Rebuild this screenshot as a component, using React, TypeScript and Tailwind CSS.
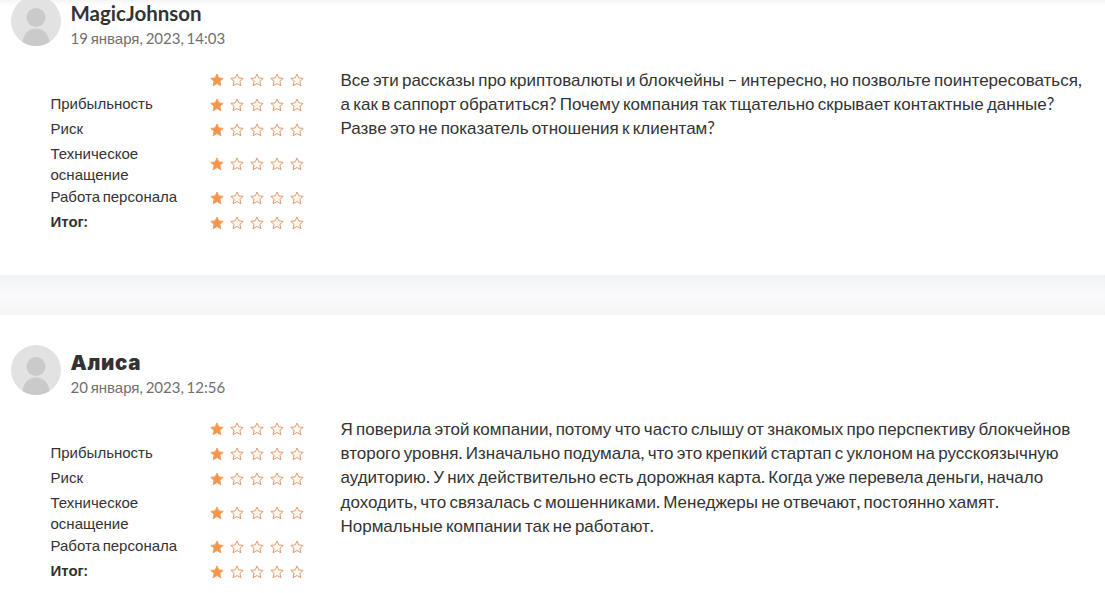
const Star = ({ on }: { on?: boolean }) => (
  <svg className="size-[14px]" viewBox="0 0 14 14" fill={on ? '#f4964a' : '#fffaf0'} stroke={on ? '#f0a060' : '#df9a74'} strokeWidth="1" strokeLinejoin="round">
    <path d="M7 1l1.800 3.900 4.400.5-3.300 2.900 1 4.500L7 10.500l-3.900 2.300 1-4.500L.8 5.400l4.400-.5z" />
  </svg>
);

const Stars = () => (
  <div className="flex gap-[6px]">
    {[0, 1, 2, 3, 4].map((i) => <Star key={i} on={i === 0} />)}
  </div>
);

// Cyrillic letters use the sans fallback; Latin, digits and punctuation stay in Lato.
const Mixed = ({ text }: { text: string }) => (
  <>
    {text.split(/([А-Яа-яЁё]+)/).map((part, i) =>
      i % 2 === 1 ? <span key={i} className="font-['Liberation_Sans',sans-serif] leading-none">{part}</span> : part,
    )}
  </>
);

const rows = [
  { label: [''], h: 'h-[24px]', pad: '' },
  { label: ['Прибыльность'], h: 'h-[25px]', pad: 'pb-[2px]' },
  { label: ['Риск'], h: 'h-[25px]', pad: 'pb-[2px]' },
  { label: ['Техническое', 'оснащение'], h: 'h-[43px]', pad: '' },
  { label: ['Работа персонала'], h: 'h-[25px]', pad: 'pb-[3px]' },
  { label: ['Итог:'], h: 'h-[25px]', pad: 'pb-[3px]', bold: true },
];

type ReviewProps = { name: string; nameClass: string; date: string; lines: string[] };

const Review = ({ name, nameClass, date, lines }: ReviewProps) => (
  <article>
    <header className="flex h-[49px] pl-[11px]">
      <svg className="mt-[-4px] size-[50px] shrink-0" viewBox="0 0 50 50">
        <circle cx="25" cy="25" r="25" fill="#e2e2e2" />
        <circle cx="25" cy="21.5" r="9.5" fill="#cacaca" />
        <path d="M11.500 46c1-8 6-13.500 13.500-13.500s12.500 5.500 13.500 13.500c-8 5.300-19 5.300-27 0z" fill="#cacaca" />
      </svg>
      <div className="pl-[9.5px]">
        <h3 className={nameClass}>{name}</h3>
        <p className="h-[20px] text-[15px] leading-[20px] text-[#707070] [word-spacing:-1.1px]"><Mixed text={date} /></p>
      </div>
    </header>
    <div className="flex pt-[19px] pl-[50.5px]">
      <div className="w-[290px]">
        {rows.map((r, i) => (
          <div key={i} className={`flex items-center ${r.h}`}>
            <div className={`w-[159.5px] text-[15px] leading-[21px] [word-spacing:-1.2px] ${r.pad} ${r.bold ? 'font-bold' : ''}`}>
              {r.label.map((l) => <div key={l}><Mixed text={l} /></div>)}
            </div>
            <Stars />
          </div>
        ))}
      </div>
      <div className="whitespace-nowrap text-[17px] leading-[24.2px] [word-spacing:-1.1px]">
        {lines.map((l) => <p key={l} className="h-[24.2px]"><Mixed text={l} /></p>)}
      </div>
    </div>
  </article>
);

export default function App() {
  return (
    <main className="h-[593px] w-full overflow-hidden bg-white font-[Lato,sans-serif] text-[#333]">
      <section className="h-[275px] bg-linear-to-b from-[#f5f5f5] to-white to-[6px]">
        <Review
          name="MagicJohnson"
          nameClass="h-[28px] text-[20.5px] leading-[27px] font-bold"
          date="19 января, 2023, 14:03"
          lines={[
            'Все эти рассказы про криптовалюты и блокчейны – интересно, но позвольте поинтересоваться,',
            'а как в саппорт обратиться? Почему компания так тщательно скрывает контактные данные?',
            'Разве это не показатель отношения к клиентам?',
          ]}
        />
      </section>
      <div className="h-[40px] bg-linear-to-b from-[#f0f2f4] via-[#fafafb] to-[#f3f5f7]" />
      <section className="pt-[34px]">
        <Review
          name="Алиса"
          nameClass="font-[Inter,sans-serif] text-[20.5px] leading-[28px] font-black tracking-[0.7px]"
          date="20 января, 2023, 12:56"
          lines={[
            'Я поверила этой компании, потому что часто слышу от знакомых про перспективу блокчейнов',
            'второго уровня. Изначально подумала, что это крепкий стартап с уклоном на русскоязычную',
            'аудиторию. У них действительно есть дорожная карта. Когда уже перевела деньги, начало',
            'доходить, что связалась с мошенниками. Менеджеры не отвечают, постоянно хамят.',
            'Нормальные компании так не работают.',
          ]}
        />
      </section>
    </main>
  );
}
